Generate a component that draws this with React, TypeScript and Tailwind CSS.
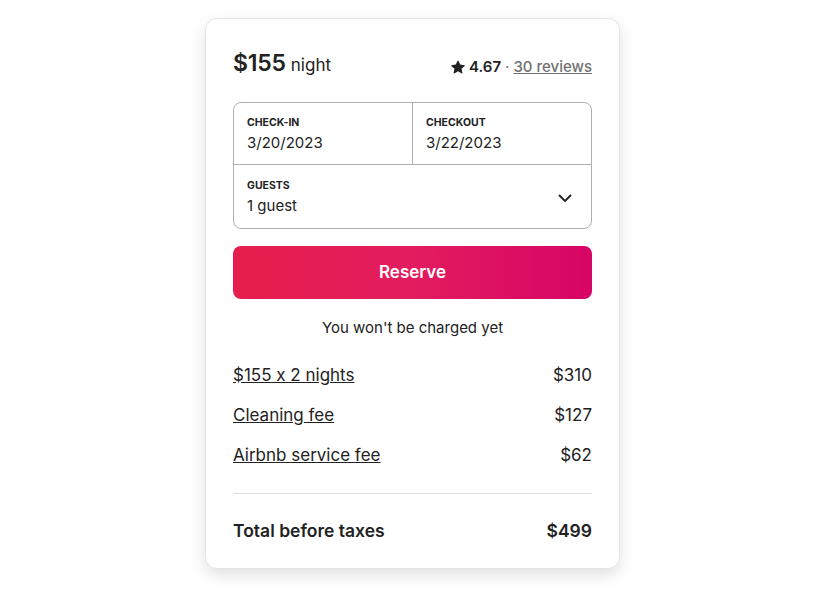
import React from "react";

export default function App() {
  return (
    <div className="min-h-screen bg-white flex justify-center pt-[18px]" style={{ fontFamily: "Inter, 'Noto Sans', sans-serif", fontFeatureSettings: "'calt' 0" }}>
      <div className="w-[415px] h-[551px] rounded-xl border border-[#e5e5e5] bg-white shadow-[0_6px_16px_rgba(0,0,0,0.12)] px-[27px] pt-[29px] text-[#222222]">
        <div className="flex items-end justify-between h-[32px]">
          <div className="flex items-baseline gap-[5px]">
            <span className="text-[23px] font-semibold tracking-[-0.2px]">$155</span>
            <span className="text-[17px]">night</span>
          </div>
          <div className="flex items-center gap-[4px] text-[15px] pb-[2px]">
            <svg viewBox="0 0 32 32" className="w-[14px] h-[14px] fill-[#222222]"><path d="M15.1 1.58l-4.13 8.88-9.86 1.27a1 1 0 0 0-.54 1.74l7.3 6.57-1.97 9.85a1 1 0 0 0 1.48 1.06l8.62-5 8.63 5a1 1 0 0 0 1.48-1.06l-1.97-9.85 7.3-6.57a1 1 0 0 0-.55-1.73l-9.86-1.28-4.12-8.88a1 1 0 0 0-1.82 0z"/></svg>
            <span className="font-semibold">4.67</span>
            <span className="text-[#717171]">·</span>
            <span className="text-[#717171] underline font-medium">30 reviews</span>
          </div>
        </div>

        <div className="mt-[22px] rounded-lg border border-[#b0b0b0]">
          <div className="flex border-b border-[#b0b0b0] h-[62px]">
            <div className="flex-1 border-r border-[#b0b0b0] px-[13px] pt-[13px]">
              <div className="text-[10.5px] font-bold leading-[14px]">CHECK-IN</div>
              <div className="text-[15px] leading-[20px] mt-[3px]">3/20/2023</div>
            </div>
            <div className="flex-1 px-[13px] pt-[13px]">
              <div className="text-[10.5px] font-bold leading-[14px]">CHECKOUT</div>
              <div className="text-[15px] leading-[20px] mt-[3px]">3/22/2023</div>
            </div>
          </div>
          <div className="flex items-center justify-between h-[63px] px-[13px]">
            <div className="mt-[1px]">
              <div className="text-[10.5px] font-bold leading-[14px]">GUESTS</div>
              <div className="text-[15px] leading-[20px] mt-[3px]">1 guest</div>
            </div>
            <svg viewBox="0 0 32 32" className="w-[16px] h-[16px] mr-[5px]" fill="none" stroke="#222" strokeWidth="4"><path d="M28 12 16.7 23.3a1 1 0 0 1-1.4 0L4 12"/></svg>
          </div>
        </div>

        <button className="mt-[17px] w-full h-[53px] rounded-lg text-white text-[17px] font-semibold bg-[linear-gradient(to_right,#e61e4d_0%,#e31c5f_50%,#d70466_100%)]">
          Reserve
        </button>

        <div className="mt-[19px] text-center text-[15px] leading-[20px] text-[#222]">You won't be charged yet</div>

        <div className="mt-[27px] flex flex-col gap-[20px] text-[17px] leading-[20px]">
          <div className="flex justify-between"><span className="underline">$155 x 2 nights</span><span>$310</span></div>
          <div className="flex justify-between"><span className="underline">Cleaning fee</span><span>$127</span></div>
          <div className="flex justify-between"><span className="underline">Airbnb service fee</span><span>$62</span></div>
        </div>

        <div className="mt-[28px] border-t border-[#dddddd]" />

        <div className="mt-[27px] flex justify-between text-[17.5px] font-semibold leading-[20px]">
          <span>Total before taxes</span>
          <span>$499</span>
        </div>
      </div>
    </div>
  );
}
